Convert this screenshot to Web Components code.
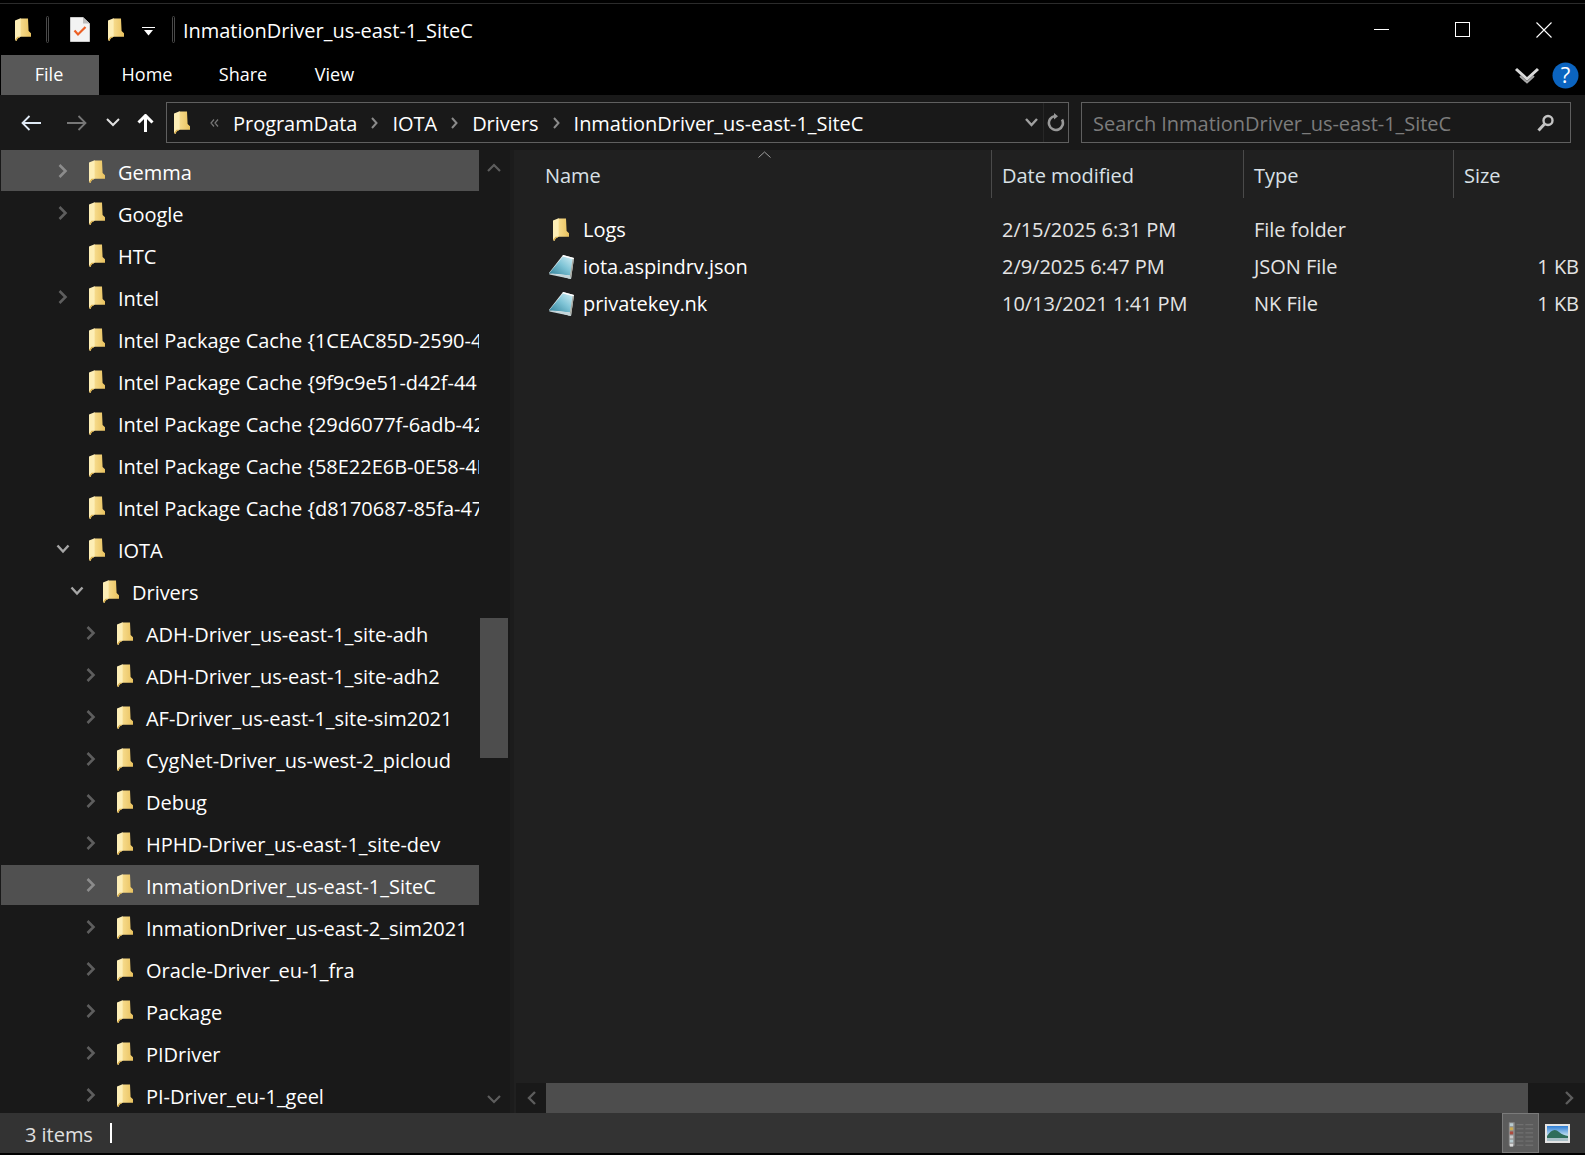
<!DOCTYPE html>
<html><head><meta charset="utf-8">
<style>
html,body{margin:0;padding:0;background:#000;width:1585px;height:1155px;overflow:hidden}
body{font-family:"Open Sans","Noto Sans",sans-serif;color:#fff}
</style></head><body>
<x-window>
  <x-titlebar title-text="InmationDriver_us-east-1_SiteC"></x-titlebar>
  <x-ribbon></x-ribbon>
  <x-navbar></x-navbar>
  <x-panes>
    <x-tree slot="tree">
      <x-row lvl="0" sel top>Gemma</x-row>
      <x-row lvl="0">Google</x-row>
      <x-row lvl="0" leaf>HTC</x-row>
      <x-row lvl="0">Intel</x-row>
      <x-row lvl="0" leaf>Intel Package Cache {1CEAC85D-2590-4</x-row>
      <x-row lvl="0" leaf>Intel Package Cache {9f9c9e51-d42f-44</x-row>
      <x-row lvl="0" leaf>Intel Package Cache {29d6077f-6adb-42</x-row>
      <x-row lvl="0" leaf>Intel Package Cache {58E22E6B-0E58-4E</x-row>
      <x-row lvl="0" leaf>Intel Package Cache {d8170687-85fa-47</x-row>
      <x-row lvl="0" open>IOTA</x-row>
      <x-row lvl="1" open>Drivers</x-row>
      <x-row lvl="2">ADH-Driver_us-east-1_site-adh</x-row>
      <x-row lvl="2">ADH-Driver_us-east-1_site-adh2</x-row>
      <x-row lvl="2">AF-Driver_us-east-1_site-sim2021</x-row>
      <x-row lvl="2">CygNet-Driver_us-west-2_picloud</x-row>
      <x-row lvl="2">Debug</x-row>
      <x-row lvl="2">HPHD-Driver_us-east-1_site-dev</x-row>
      <x-row lvl="2" sel>InmationDriver_us-east-1_SiteC</x-row>
      <x-row lvl="2">InmationDriver_us-east-2_sim2021</x-row>
      <x-row lvl="2">Oracle-Driver_eu-1_fra</x-row>
      <x-row lvl="2">Package</x-row>
      <x-row lvl="2">PIDriver</x-row>
      <x-row lvl="2">PI-Driver_eu-1_geel</x-row>
    </x-tree>
    <x-files slot="files">
      <x-file kind="folder" name="Logs" date="2/15/2025 6:31 PM" type="File folder"></x-file>
      <x-file kind="pad" name="iota.aspindrv.json" date="2/9/2025 6:47 PM" type="JSON File" size="1 KB"></x-file>
      <x-file kind="pad" name="privatekey.nk" date="10/13/2021 1:41 PM" type="NK File" size="1 KB"></x-file>
    </x-files>
  </x-panes>
  <x-status></x-status>
</x-window>
<script>
const FONT='"Open Sans","Noto Sans",sans-serif';
const TXT='font-size:20px;letter-spacing:-.03px;';
let gid=0;
function folderSvg(){const i='f'+(gid++);return `<svg width="16" height="23" viewBox="0 0 16 23" style="display:block;flex:none"><defs><linearGradient id="${i}" x1="0" x2="1" y1="0" y2="0"><stop offset="0" stop-color="#f7dc8e"/><stop offset="1" stop-color="#e9c25f"/></linearGradient></defs><path d="M5 .5L13 .5 13.6 13 16 15.2 16 18.8 5 18.8Z" fill="url(#${i})"/><path d="M0 2.4L5.6 .2 5.6 18.8 2.6 20.4 1.4 23 0 22Z" fill="#fdeeb6"/><path d="M0 21.8L2.6 18.8 5.600 18.8 2.6 20.4 1.4 23Z" fill="#d8ad4a"/></svg>`}
function padSvg(){const i='p'+(gid++);return `<svg width="26" height="25" viewBox="0 0 26 25" style="display:block"><defs><linearGradient id="${i}" x1="0" y1="1" x2="1" y2="0"><stop offset="0" stop-color="#2f7f98"/><stop offset=".55" stop-color="#7fc4d6"/><stop offset="1" stop-color="#d2eef5"/></linearGradient></defs><path d="M1 19L15 1 26 4 23 25Z" fill="#e6eef0"/><path d="M1 19.5L15 2.4 24.6 5 22 21.5 10 20Z" fill="url(#${i})"/><path d="M24.6 5L26 4 23 25 20 24.5 22 21.5Z" fill="#a5a8a0"/><path d="M15 1L26 4 25.5 5.2 14.6 2.2Z" fill="#ffffff"/><path d="M1 19.5L22 21.5 23 25 1.5 20.5Z" fill="#c4d5da"/></svg>`}
class Base extends HTMLElement{
  constructor(){super();this.attachShadow({mode:'open'})}
}
customElements.define('x-window',class extends Base{connectedCallback(){this.shadowRoot.innerHTML=`<style>:host{display:flex;flex-direction:column;width:1585px;height:1153px;background:#000;font-family:${FONT};overflow:hidden}</style><slot></slot>`}});
customElements.define('x-titlebar',class extends Base{connectedCallback(){const t=this.getAttribute('title-text');this.shadowRoot.innerHTML=`<style>
:host{display:flex;align-items:center;height:52px;margin-top:3px;border-top:1px solid #2b2b2b;box-sizing:border-box;padding-left:15px;position:relative;flex:none}
.sep{width:3px;height:27px;border:1px solid #4a4a4a;border-radius:2px;box-sizing:border-box;flex:none}
.t{${TXT}color:#fff;margin-left:8px;white-space:nowrap;position:relative;top:1px}
.ctl{margin-left:auto;display:flex;align-items:center;height:100%;padding-right:1px}
.ctl span{display:flex;width:81px;justify-content:center}
.ctl svg{display:block}
</style>
${folderSvg()}
<div class="sep" style="margin-left:15px"></div>
<svg width="20" height="25" viewBox="0 0 20 25" style="margin-left:21px;display:block"><path d="M.5.5H13L19.5 6.5V24.5H.5Z" fill="#f3f3f3" stroke="#c9c9c9"/><path d="M13 .5V6.5H19.5Z" fill="#bdbdbd"/><path d="M4.5 13.5L8 17.5 15.5 10" fill="none" stroke="#ec5f24" stroke-width="2.2"/></svg>
<div style="margin-left:18px">${folderSvg()}</div>
<svg width="13" height="9" viewBox="0 0 13 9" style="margin-left:18px;display:block;position:relative;top:2px"><path d="M0 .5H13" stroke="#fff"/><path d="M2 3H11L6.500 8.500Z" fill="#fff"/></svg>
<div class="sep" style="margin-left:17px"></div>
<div class="t">${t}</div>
<div class="ctl">
<span><svg width="15" height="1"><rect width="15" height="1" fill="#fff"/></svg></span>
<span><svg width="15" height="15"><rect x=".5" y=".5" width="14" height="14" fill="none" stroke="#fff"/></svg></span>
<span><svg width="16" height="16"><path d="M.5.500L15.500 15.500M15.500.500L.500 15.500" stroke="#fff" stroke-width="1.100"/></svg></span>
</div>`}});
customElements.define('x-ribbon',class extends Base{connectedCallback(){this.shadowRoot.innerHTML=`<style>
:host{display:flex;height:40px;flex:none;align-items:stretch;padding-left:1px}
.tab{display:flex;align-items:center;justify-content:center;color:#fff;font-size:18px;letter-spacing:0;padding-bottom:2px;box-sizing:border-box}
.file{width:98px;background:#585858;padding-right:2px}
.right{margin-left:auto;display:flex;align-items:center;padding-right:6px}
</style>
<div class="tab file">File</div>
<div class="tab" style="width:96px">Home</div>
<div class="tab" style="width:96px">Share</div>
<div class="tab" style="width:87px">View</div>
<div class="right">
<svg width="26" height="18" viewBox="0 0 26 18" style="position:relative;top:1px;left:-1px"><path d="M2 2L13 12 24 2" fill="none" stroke="#d9d9d9" stroke-width="3"/><path d="M6 9L13 15.500 20 9" fill="none" stroke="#a8a8a8" stroke-width="2"/></svg>
<svg width="27" height="27" viewBox="0 0 27 27" style="margin-left:11px"><circle cx="13.500" cy="13.500" r="13" fill="#0b64c0"/><text x="13.500" y="21" text-anchor="middle" font-size="22" font-family="Open Sans" fill="#fff">?</text></svg>
</div>`}});
customElements.define('x-navbar',class extends Base{connectedCallback(){
const chev=`<svg class="c" width="7" height="12" viewBox="0 0 7 12"><path d="M1 1L5.500 6 1 11" fill="none" stroke="#8a8a8a" stroke-width="2"/></svg>`;
this.shadowRoot.innerHTML=`<style>
:host{display:flex;align-items:center;height:55px;flex:none;background:#191919;position:relative;${TXT}box-sizing:border-box;padding-left:21px}
svg{display:block;flex:none}
.box{display:flex;align-items:center;height:41px;box-sizing:border-box;border:1px solid #5f5f5f;background:#191919}
.addr{width:903px;margin-left:12px;padding-left:7px;white-space:nowrap}
.addr b{font-weight:400;color:#fff;position:relative;top:1px}
.search{width:490px;margin-left:12px;padding-left:11px;color:#7c7c7c}
.search span{position:relative;top:1px}
.end{margin-left:auto;display:flex;align-items:center;height:100%}
.c{margin:0 14px 0 14px}
</style>
<svg width="20" height="16" viewBox="0 0 20 16"><path d="M20 8H2M8.500 1L1.500 8 8.500 15" fill="none" stroke="#dfe9f5" stroke-width="1.800"/></svg>
<svg width="20" height="16" viewBox="0 0 20 16" style="margin-left:26px"><path d="M0 8H18M11.500 1L18.500 8 11.500 15" fill="none" stroke="#777" stroke-width="1.800"/></svg>
<svg width="14" height="9" viewBox="0 0 14 9" style="margin-left:19px"><path d="M1 1L7 7 13 1" fill="none" stroke="#e0e0e0" stroke-width="2"/></svg>
<svg width="17" height="18" viewBox="0 0 17 18" style="margin-left:17px"><path d="M8.500 18V2M1.500 8.500L8.500 1.500 15.500 8.500" fill="none" stroke="#fff" stroke-width="3"/></svg>
<div class="box addr">
${folderSvg()}
<svg width="9" height="8" viewBox="0 0 9 8" style="margin-left:20px"><path d="M4 .5L1 4 4 7.500M8 .5L5 4 8 7.500" fill="none" stroke="#777" stroke-width="1.200"/></svg>
<b style="margin-left:14px">ProgramData</b>${chev}<b>IOTA</b>${chev}<b>Drivers</b>${chev}<b>InmationDriver_us-east-1_SiteC</b>
<div class="end">
<svg width="13" height="9" viewBox="0 0 13 9"><path d="M1 1L6.500 7 12 1" fill="none" stroke="#a0a0a0" stroke-width="2.400"/></svg>
<div style="width:1px;height:100%;background:#272727;margin:0 3px 0 5px"></div>
<svg width="18" height="19" viewBox="0 0 18 19" style="margin-right:3px"><path d="M15 6.500A7 7 0 1 1 8 3" fill="none" stroke="#999" stroke-width="2.600"/><path d="M7 0L11 3.200 7 6.500Z" fill="#999"/></svg>
</div></div>
<div class="box search"><span>Search InmationDriver_us-east-1_SiteC</span>
<div class="end" style="margin-right:16px"><svg width="17" height="18" viewBox="0 0 17 18"><circle cx="11" cy="6.500" r="4.500" fill="none" stroke="#c4c4c4" stroke-width="2.400"/><path d="M7.500 10L1.500 16.500" stroke="#c4c4c4" stroke-width="3"/></svg></div></div>`}});
customElements.define('x-panes',class extends Base{connectedCallback(){this.shadowRoot.innerHTML=`<style>
:host{display:grid;grid-template-columns:508px 6px 1fr;flex:1;min-height:0;background:#191919}
.split{background:#1c1c1c;border-left:2px solid #191919}
::slotted(x-tree){grid-column:1}
::slotted(x-files){grid-column:3}
</style><slot name="tree"></slot><div class="split"></div><slot name="files"></slot>`}});
customElements.define('x-tree',class extends Base{connectedCallback(){this.shadowRoot.innerHTML=`<style>
:host{display:grid;grid-template-columns:480px 28px;min-height:0;overflow:hidden;height:963px}
.rows{overflow:hidden;padding-left:1px;padding-right:1px}
.bar{display:grid;grid-template-rows:35px 433px 140px 1fr 28px;justify-items:center;align-items:center;background:#191919}
.thumb{background:#4d4d4d;width:28px;height:100%}
</style><div class="rows"><slot></slot></div>
<div class="bar">
<svg width="14" height="9" viewBox="0 0 14 9"><path d="M1 8L7 2 13 8" fill="none" stroke="#5d5d5d" stroke-width="2.200"/></svg>
<div></div><div class="thumb"></div><div></div>
<svg width="14" height="9" viewBox="0 0 14 9"><path d="M1 1L7 7 13 1" fill="none" stroke="#5d5d5d" stroke-width="2.200"/></svg>
</div>`}});
customElements.define('x-row',class extends Base{connectedCallback(){
const l=+this.getAttribute('lvl'),leaf=this.hasAttribute('leaf'),open=this.hasAttribute('open'),sel=this.hasAttribute('sel'),top=this.hasAttribute('top');
let ch='';
if(open)ch=`<svg width="14" height="10" viewBox="0 0 14 10"><path d="M1.500 1.500L7 7.500 12.500 1.500" fill="none" stroke="#a6a6a6" stroke-width="2.400"/></svg>`;
else if(!leaf)ch=`<svg width="10" height="14" viewBox="0 0 10 14" style="margin-left:2px"><path d="M1.500 1L7.500 7 1.500 13" fill="none" stroke="${sel?'#8c8c8c':'#5e5e5e'}" stroke-width="2.600"/></svg>`;
this.shadowRoot.innerHTML=`<style>
:host{display:block;height:42px;box-sizing:border-box;padding:${top?'0 0 1px':'1px 0'};${TXT}color:#fff;white-space:nowrap;overflow:hidden}
.in{display:flex;align-items:center;height:100%;padding-left:${55+14*l}px;${sel?'background:#505050;':''}${top?'padding-top:1px;box-sizing:border-box;':''}}
.ch{width:14px;height:14px;display:flex;align-items:center;flex:none}
.f{margin-left:19px;margin-right:13px;flex:none}
span{position:relative;top:1px}
</style><div class="in"><div class="ch">${ch}</div><div class="f">${folderSvg()}</div><span><slot></slot></span></div>`}});
customElements.define('x-files',class extends Base{connectedCallback(){this.shadowRoot.innerHTML=`<style>
:host{display:flex;flex-direction:column;background:#202020;height:963px;${TXT}position:relative;min-width:0}
.head{display:grid;grid-template-columns:478px 252px 210px 1fr;height:48px;flex:none;color:#d9e0e6;position:relative}
.head div{display:flex;align-items:center;padding-left:10px;padding-top:2px;box-sizing:border-box;border-right:1px solid #4a4a4a}
.head div:first-child{padding-left:31px}
.head div:nth-child(4){border:none}
.sort{position:absolute;left:244px;top:1px}
.list{flex:1;padding-top:13px;min-height:0}
.hs{display:grid;grid-template-columns:30px 982px 1fr;height:30px;flex:none;background:#191919;align-items:center;margin-left:2px}
.hs .th{background:#4d4d4d;height:100%}
.hs svg{display:block;justify-self:center}
.hs svg:last-child{justify-self:end;margin-right:11px}
</style>
<div class="head"><div>Name</div><div>Date modified</div><div>Type</div><div>Size</div>
<svg class="sort" width="13" height="7" viewBox="0 0 13 7"><path d="M.5 6.500L6.500 1 12.500 6.500" fill="none" stroke="#a0a0a0"/></svg></div>
<div class="list"><slot></slot></div>
<div class="hs">
<svg width="9" height="14" viewBox="0 0 9 14"><path d="M8 1L2 7 8 13" fill="none" stroke="#5d5d5d" stroke-width="2.400"/></svg>
<div class="th"></div>
<svg width="9" height="14" viewBox="0 0 9 14"><path d="M1 1L7 7 1 13" fill="none" stroke="#5d5d5d" stroke-width="2.400"/></svg>
</div>`}});
customElements.define('x-file',class extends Base{connectedCallback(){
const g=n=>this.getAttribute(n)||'';const k=g('kind');
this.shadowRoot.innerHTML=`<style>
:host{display:grid;grid-template-columns:478px 252px 210px 1fr;height:37px;align-items:center;color:#fff;white-space:nowrap}
.n{display:flex;align-items:center;padding-left:34px}
.ic{width:26px;height:25px;display:flex;justify-content:center;align-items:center;margin-right:9px}
.d,.t{padding-left:10px;color:#e4e4e4}
.s{text-align:right;padding-right:6px;color:#e4e4e4}
</style>
<div class="n"><div class="ic">${k==='folder'?folderSvg():padSvg()}</div>${g('name')}</div>
<div class="d">${g('date')}</div><div class="t">${g('type')}</div><div class="s">${g('size')}</div>`}});
customElements.define('x-status',class extends Base{connectedCallback(){
let lines='';for(let r=0;r<6;r++){lines+=`<rect x="7" y="${6+r*4.200}" width="3.500" height="3" fill="${['#b9ccd1','#c9a94f','#ad4a3e','#c8c8c8','#b9ccd1','#dcdcdc'][r]}"/><rect x="14" y="${7+r*4.200}" width="7" height="1" fill="#767676"/><rect x="23" y="${7+r*4.200}" width="8" height="1" fill="#767676"/>`}
this.shadowRoot.innerHTML=`<style>
:host{display:flex;align-items:center;height:40px;flex:none;background:#333;${TXT}color:#e0e0e0;padding-left:25px;box-sizing:border-box}
.x{position:relative;top:1px}
.bar{width:2px;height:20px;background:#fff;margin-left:17px}
.r{margin-left:auto;display:flex;height:100%;align-items:stretch}
.b1{width:37px;background:#5c5c5c;border:1px solid #7a7a7a;box-sizing:border-box;display:flex;align-items:center;justify-content:center}
.b2{width:46px;display:flex;align-items:center;justify-content:flex-start;padding-left:6px;box-sizing:border-box}
svg{display:block}
</style><span class="x">3 items</span><div class="bar"></div>
<div class="r"><div class="b1"><svg width="36" height="32" viewBox="0 0 36 32"><rect x="6" y="5" width="6" height="24" fill="#8e8e8e"/>${lines}</svg></div>
<div class="b2"><svg width="25" height="19" viewBox="0 0 25 19"><defs><linearGradient id="sky" x1="0" y1="0" x2="0" y2="1"><stop offset="0" stop-color="#2f7fd6"/><stop offset=".6" stop-color="#b9d9ef"/><stop offset="1" stop-color="#dfeaf0"/></linearGradient></defs><rect width="25" height="19" fill="#e4e4e4"/><rect x="2" y="2" width="21" height="15" fill="url(#sky)"/><path d="M2 12C6 6 10 4 14 8 17 11 20 11 23 12V14H2Z" fill="#2f6d5b"/><rect x="2" y="14" width="21" height="3" fill="#a9c0c8"/></svg></div></div>`}});
</script>
</body></html>
